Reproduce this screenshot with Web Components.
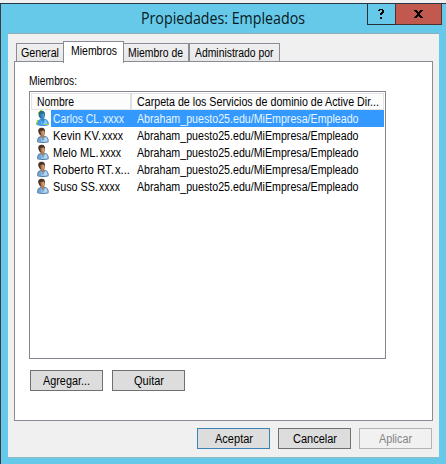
<!DOCTYPE html>
<html lang="es"><head><meta charset="utf-8"><title>Propiedades: Empleados</title>
<style>html,body{margin:0;width:446px;height:464px;overflow:hidden;background:#f0f0f0;font:12px/14px "Liberation Sans",Arial,sans-serif;color:#000}</style></head>
<body>
<property-window></property-window>
<script>
const define=(name,html,setup)=>customElements.define(name,class extends HTMLElement{
  connectedCallback(){
    if(this.shadowRoot)return;
    this.attachShadow({mode:'open'}).innerHTML='<style>*{box-sizing:border-box}</style>'+html(this);
    if(setup)setup(this);
  }
});

// A single line of text condensed to the width given in its w attribute.
define('fit-text',()=>`<style>:host{display:block;flex:none;white-space:pre;height:1.1667em}span{display:inline-block;transform-origin:0 0}</style><span><slot></slot></span>`,el=>{
  const w=+el.getAttribute('w'),s=el.shadowRoot.querySelector('span');
  const m=s.getBoundingClientRect().width;
  el.style.width=w+'px';
  s.style.transform=`scaleX(${w/m})`;
});

define('user-icon',()=>`<style>:host{display:block;width:14px;height:17px;flex:none}svg{display:block}
.hair{fill:#4d3426}.face{fill:#b27b55}.lite{fill:#dba27a}.coat{fill:#73a5d4}.edge{fill:#416f9e}.shine{fill:#b4d5ee}
:host([selected]) .hair{fill:#236c9d}:host([selected]) .face{fill:#3486bd}:host([selected]) .lite{fill:#559fca}:host([selected]) .coat{fill:#489de6}:host([selected]) .edge{fill:#268ad0}:host([selected]) .shine{fill:#83c6f7}
.rim{display:none}:host([selected]) .rim{display:block}</style>
<svg width="14" height="17" viewBox="0 0 14 17">
<path class="edge" d="M1.3 15.2C.7 11.7 2 9.6 5 8.9L9 8.7C11.8 9.8 13.2 12 12.5 15.2Q7 16.8 1.3 15.2Z"/>
<path class="coat" d="M2.1 14.7C1.7 11.8 2.9 10.1 5.3 9.5L9 9.4C11.4 10.4 12.2 12.2 11.9 14.7Q7 15.9 2.1 14.7Z"/>
<path class="shine" d="M4.8 9.5L6.9 14.9 9.2 9.5 11.2 11.2 11.6 14.2 7 15.1 5.7 14.8Z"/>
<path class="hair" d="M2.2 4.4C2 1.8 3.4.6 5.6.7 8.3.6 9.3 2.4 9 5L8 8.4 5 9 3.3 7.2Z"/>
<path class="face" d="M4.3 4.2L7.8 3.2 8.9 5.1 8.3 7.8 7.6 8.9 8.2 10.3 6.9 11.7 4.7 9.5 5 8.3Z"/>
<path class="lite" d="M6.3 4.5L8.1 4.2 8.3 6.7 7 8.3Z"/>
<g class="rim" fill="#9bd52b"><path d="M2 2h1V1h1V0h2v1H4v1H3v3H2zM0 12h1v-2h1v2H1v3H0z"/><path d="M9 14h4v1H9z"/></g></svg>`);

define('caption-button',el=>`<style>:host{display:flex;align-items:center;justify-content:center;width:29px;height:21px;border:1px solid #272e34;border-top:0;background:#66c9e9;color:#000;margin-left:0}
:host([kind=close]){width:47px;background:#c2594f;border-color:#4f2f32;border-left-color:#4f2f32;margin-left:-1px}svg{display:block}</style>${el.getAttribute('kind')==='close'
?'<svg width="9" height="8" viewBox="0 0 9 8" shape-rendering="crispEdges"><path d="M0 0h3v1h1v1h1v-1h1v-1h3v1h-1v1h-1v1h-1v2h1v1h1v1h1v1h-3v-1h-1v-1h-1v1h-1v1h-3v-1h1v-1h1v-1h1v-2h-1v-1h-1v-1h-1z"/></svg>'
:'<svg width="7" height="10" viewBox="0 0 7 10" shape-rendering="crispEdges"><path d="M1 0h4v1h1v3h-1v1h-1v1h-2v-2h1v-1h1v-2h-2v1h-2v-1h1zM2 8h2v2h-2z"/></svg>'}`);

define('tab-item',()=>`<style>:host{display:flex;height:19px;border:1px solid #898c95;background:linear-gradient(#efefef,#e8e8e8);padding-top:2px}
:host([active]){height:22px;background:#fff;border-bottom:0;z-index:1;margin-bottom:-1px}</style><slot></slot>`);

define('push-button',()=>`<style>:host{display:flex;justify-content:center;width:73px;height:21px;border:1px solid #707070;background:#ddd;padding-top:3px}
:host([default]){border-color:#3b83b3}:host([disabled]){border-color:#b2b4b4;background:#f1f1f1;color:#858585}</style><slot></slot>`);

define('member-row',el=>{
  const d=k=>el.getAttribute(k);
  return `<style>:host{display:flex;height:17px;padding-left:6px}
.bar{display:flex;margin-left:1px;width:333px;padding-top:2px;height:17px}
:host([selected]) .bar{background:#3399ff;color:#e6f5ff}.name{display:flex;width:86px;padding-left:2px;gap:${d('gap')||1}px}</style>
<user-icon ${el.hasAttribute('selected')?'selected':''}></user-icon><div class="bar"><div class="name"><fit-text w="${d('nw')}">${d('name')}</fit-text><fit-text w="${d('sw')}">${d('suffix')}</fit-text></div><fit-text w="221.5">Abraham_puesto25.edu/MiEmpresa/Empleado</fit-text></div>`;
});

define('member-list',()=>`<style>:host{display:block;width:357px;height:268px;border:1px solid #828790;background:#fff}
.head{display:flex;height:18px;padding:1px 0 0 1px;margin-right:1px}
.cell{display:flex;height:17px;border:1px solid #e4e4e4;border-left-width:1px;background:#fcfcfc;padding:1px 0 0 5px}
.a{width:100px;border-right:1px solid #dedede}.b{flex:1;border-left:1px solid #dedede}</style>
<div class="head"><div class="cell a"><fit-text w="37">Nombre</fit-text></div><div class="cell b"><fit-text w="242">Carpeta de los Servicios de dominio de Active Dir...</fit-text></div></div>
<member-row selected name="Carlos CL." nw="49" suffix="xxxx" sw="21"></member-row>
<member-row name="Kevin KV." nw="48" suffix="xxxx" sw="21"></member-row>
<member-row name="Melo ML." nw="45.5" suffix="xxxx" sw="21"></member-row>
<member-row name="Roberto RT." nw="61" suffix="x..." sw="15"></member-row>
<member-row name="Suso SS." nw="45" suffix="xxxx" sw="21"></member-row>`);

define('property-window',()=>`<style>
:host{display:flex;flex-direction:column;width:446px;height:461px;margin-top:3px;background:#66c9e9;border-top:1px solid #253843;border-left:1px solid #393c45}
.title{display:flex;height:29px;flex:none;padding-right:5px}
.title fit-text{font:15.5px/18px "Open Sans","Noto Sans",sans-serif;margin:5px auto 0 140px;color:#081a22}
.client{display:flex;flex-direction:column;margin-left:7px;width:431px;height:425px;flex:none;background:#f0f0f0;border-top:1px solid #91adb7;border-bottom:1px solid #91b9c5;padding:7px 0 0 6px}
.tabs{display:flex;align-items:flex-end;height:21px;padding-left:2px;margin-bottom:-1px;position:relative}
.panel{width:419px;height:360px;border:1px solid #898c95;background:#fff;padding:12px 0 0 14px;flex:none}
member-list{margin-top:3px}
.actions{display:flex;gap:9px;padding:11px 0 0 1px}
.foot{display:flex;gap:8px;justify-content:flex-end;padding:7px 7px 0 0}
</style>
<div class="title"><fit-text w="164">Propiedades: Empleados</fit-text><caption-button kind="help"></caption-button><caption-button kind="close"></caption-button></div>
<div class="client"><div class="tabs">
<tab-item style="width:48px;padding-left:4px"><fit-text w="38">General</fit-text></tab-item>
<tab-item active style="width:61px;margin-left:-1px;padding-left:7px"><fit-text w="46">Miembros</fit-text></tab-item>
<tab-item style="width:66px;margin-left:-1px;padding-left:4px"><fit-text w="55">Miembro de</fit-text></tab-item>
<tab-item style="width:91px;padding-left:5px"><fit-text w="78.5">Administrado por</fit-text></tab-item></div>
<div class="panel"><fit-text w="48">Miembros:</fit-text><member-list></member-list>
<div class="actions"><push-button><fit-text w="47">Agregar...</fit-text></push-button><push-button><fit-text w="30">Quitar</fit-text></push-button></div></div>
<div class="foot"><push-button default><fit-text w="38">Aceptar</fit-text></push-button><push-button><fit-text w="44">Cancelar</fit-text></push-button><push-button disabled><fit-text w="33">Aplicar</fit-text></push-button></div>
</div>`);
</script>
</body></html>
